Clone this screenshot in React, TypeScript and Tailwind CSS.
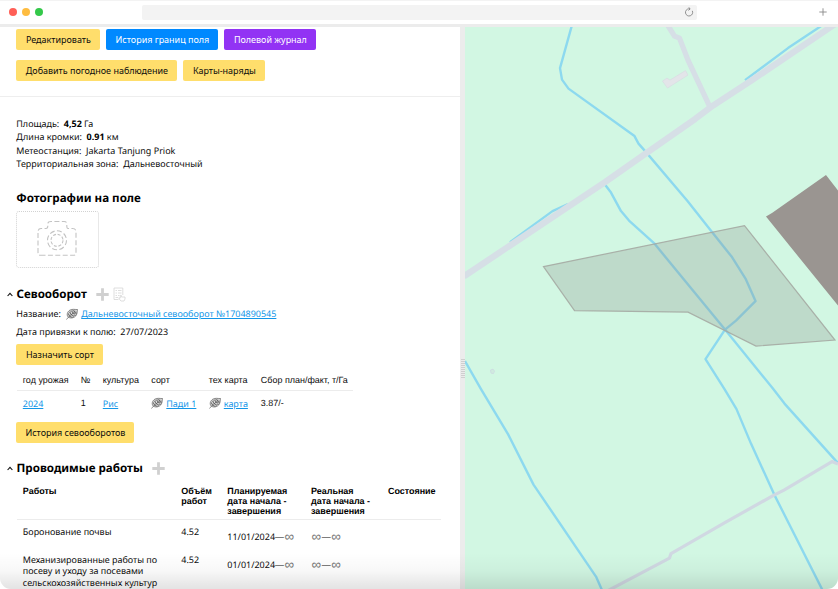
import type { ReactNode } from "react";

function Button({ children, className }: { children: ReactNode; className: string }) {
  return (
    <button className={`flex h-[21px] shrink-0 items-center justify-center rounded-[2px] whitespace-nowrap ${className}`}>
      {children}
    </button>
  );
}

function Link({ children, className = "" }: { children: ReactNode; className?: string }) {
  return (
    <a className={`text-[#1296e8] underline decoration-1 underline-offset-1 whitespace-nowrap ${className}`}>{children}</a>
  );
}

function Infinity() {
  return <span className="inline-block w-[10.8px] text-center align-[-1px] font-['Liberation_Sans',sans-serif] text-[13.5px] leading-[8px] text-[#777]">∞</span>;
}

function Dash() {
  return <span className="font-['Liberation_Sans',sans-serif]">—</span>;
}

function Plus() {
  return (
    <svg className="size-[13px] shrink-0" viewBox="0 0 13 13">
      <path d="M6.5 0.3V12.7M0.3 6.5H12.7" stroke="#d0d0d0" strokeWidth="2.8" fill="none" />
    </svg>
  );
}

function Chevron() {
  return (
    <svg className="mr-[4px] h-[5px] w-[6px] shrink-0" viewBox="0 0 6 5">
      <path d="M0.6 4L3 1.3L5.4 4" stroke="#111" strokeWidth="1.1" fill="none" />
    </svg>
  );
}

function Leaf() {
  return (
    <svg className="h-[12px] w-[12px] shrink-0" viewBox="0 0 12 12" fill="none" stroke="#444" strokeWidth="0.6">
      <path d="M0.5 11.5L2.4 9.2M2.4 9.2C0.4 7.4 1 4 3.8 2.2C6.2 0.7 8.8 1.6 11.7 1.6C10.9 2.8 11.6 4.8 10.4 7C8.8 9.8 5 10.8 2.4 9.2Z" fill="#999" fillOpacity="0.3" />
      <path d="M2.4 9.2L9.5 3M3.4 8.3L2.5 5M5 7L4 2.8M6.6 5.6L6 1.9M8.2 4.2L8 2M3.4 8.3L7 9.3M5 7L9.5 7.6M6.6 5.6L10.7 5.6M8.2 4.2H10.8M2 6L5.5 9.8M3 4L8 9M5 2.8L9.6 7.2M7 2.2L10.4 5.4" strokeWidth="0.5" />
    </svg>
  );
}

function ListHand() {
  return (
    <svg className="ml-[4px] h-[15px] w-[13px] shrink-0" viewBox="0 0 13 15" fill="none" stroke="#d5d5d5" strokeWidth="0.8">
      <path d="M5.5 12.5H1V1H9.8V8M2.5 3.5H4M5 3.5H8.5M2.5 6H4M5 6H8.5M2.5 8.5H4M5 8.5H6.5M2.5 10.5H5" />
      <path d="M7 13L5.8 10.8L7.3 11V8.4H8.4V10H12V12L11 14H8Z" />
    </svg>
  );
}

function Camera() {
  return (
    <svg className="h-[37px] w-[40px]" viewBox="0 0 40 37" fill="none" stroke="#c3c3c3" strokeWidth="1.1" strokeDasharray="5 2.4">
      <path d="M3.5 35.3H36.5Q39 35.3 39 32V12Q39 8.5 35.5 8.5H31Q29.8 8.5 29.8 6V4Q29.8 1.5 27 1.5H14Q10.8 1.5 10.8 4V6Q10.8 8.5 9 8.5H4Q1 8.5 1 12V32Q1 35.3 3.5 35.3Z" />
      <circle cx="20" cy="20.3" r="9.5" />
      <circle cx="20" cy="20.3" r="6" strokeDasharray="3 1.7" />
    </svg>
  );
}

function FieldMap() {
  return (
    <svg className="h-[562.4px] w-[372.6px] shrink-0" viewBox="465 26.9 372.6 562.4" fill="none">
      <rect x="464" y="26" width="375" height="564" fill="#d2f7e3" />
      <g stroke="#8dd9ef" strokeWidth="2.4" strokeLinejoin="round">
        <path d="M571.7 26L560 68L562 79.5L568.5 88.5L634.5 136L638.5 143.5L646 152L687.5 201L712 232L732 257L745.5 278.5L755.5 301L736 320.5L725 329.5L705.5 359L724.5 389L736.5 409L751 443.5L774.5 495L822.5 590" />
        <path d="M604.5 184L611 192.5L621 211L629 220.5L654 243L725 329.5L772.5 388L784.5 403.5L838 463" />
        <path d="M745 80L788 48L824 24M510 242L552.5 211L568 204" />
        <path d="M465 361L481 389L508 434L533.5 484.5L596 576.5L602 590" />
      </g>
      <g stroke="#d6dfe6" strokeLinejoin="round">
        <path d="M464 276.2L605 182L647 152.5L695 119L713 105.5L752 80L795 51L835 24" strokeWidth="6.3" />
        <path d="M667 24L674.5 36L679.5 38L688 60L709.5 106" strokeWidth="5.3" />
        <path d="M608 590.5L669.5 558L671 553.5L724 523L774 495L784 490L832 461.5L838 464" stroke="#d0d8e2" strokeWidth="3.2" />
      </g>
      <path d="M662.5 81L667 78L670 80L685.5 70.5L688 75L667.5 88Z" fill="#e3e5e9" stroke="#d9dde3" strokeWidth="0.7" />
      <path d="M490.5 370L493 369L494.5 371L493.5 373.5L491 373Z" fill="#d0ebdf" stroke="#cdd9e1" strokeWidth="0.8" />
      <path d="M543.5 266.5L744.5 225.5L835 340L756 346L688 312L574.5 310.5Z" fill="#8b9089" fillOpacity="0.28" stroke="#a5aaa3" strokeOpacity="0.9" strokeWidth="1.2" />
      <path d="M826 175L838 190.5V305.5L766 216.5L772 213Z" fill="#9a9591" />
    </svg>
  );
}

const works = [
  { name: <>Боронование почвы</>, area: "4.52", start: "11/01/2024" },
  { name: <>Механизированные работы по<br />посеву и уходу за посевами<br />сельскохозяйственных культур</>, area: "4.52", start: "01/01/2024" },
];

export default function App() {
  return (
    <div className="relative flex h-[589px] w-[838px] flex-col overflow-hidden rounded-b-[11px] bg-white font-['Noto_Sans',sans-serif] text-[8.97px] leading-[13px] text-[#0c0c0c] [text-rendering:geometricPrecision]">
      <header className="flex h-[26.6px] shrink-0 items-center border-t border-b-[3px] border-t-[#f3f3f3] border-b-[#ececec] pl-[8.5px]">
        <div className="flex w-[133.5px] gap-[5px] pb-[1.4px]">
          <i className="size-[8px] rounded-full bg-[#ff5f57]" />
          <i className="size-[8px] rounded-full bg-[#febc40]" />
          <i className="size-[8px] rounded-full bg-[#34c84a]" />
        </div>
        <div className="flex h-[15px] w-[555px] items-center justify-end rounded-[2px] bg-[#f3f3f3] pr-[3px]">
          <svg className="size-[10px]" viewBox="0 0 10 10" fill="none" stroke="#777" strokeWidth="0.8">
            <path d="M8.3 3.8A3.6 3.6 0 1 1 4.8 1.8H6M4.5 0.2L6.2 1.8L4.5 3.5" />
          </svg>
        </div>
        <svg className="ml-[121.5px] size-[8px]" viewBox="0 0 8 8">
          <path d="M4 0.3V7.7M0.3 4H7.7" stroke="#888" strokeWidth="0.9" />
        </svg>
      </header>

      <main className="flex h-[562.4px]">
        <section className="flex w-[460px] shrink-0 flex-col">
          <div className="flex h-[70.4px] shrink-0 flex-col gap-[9.5px] border-b border-[#eeeeee] pt-[2.9px] pl-[16.4px]">
            <div className="flex gap-[6px]">
              <Button className="w-[84px] bg-[#ffde6c]">Редактировать</Button>
              <Button className="w-[112px] bg-[#0089ff] text-white">История границ поля</Button>
              <Button className="w-[92px] bg-[#9233f4] text-white">Полевой журнал</Button>
            </div>
            <div className="flex gap-[6px]">
              <Button className="w-[161px] bg-[#ffde6c]">Добавить погодное наблюдение</Button>
              <Button className="w-[82px] bg-[#ffde6c]">Карты-наряды</Button>
            </div>
          </div>

          <div className="mt-[20.3px] shrink-0 pl-[16.3px] leading-[13.2px]">
            <p>Площадь:&nbsp; <b className="text-black">4,52</b> Га</p>
            <p>Длина кромки:&nbsp; <b className="text-black">0.91</b> км</p>
            <p>Метеостанция:&nbsp; Jakarta Tanjung Priok</p>
            <p>Территориальная зона:&nbsp; Дальневосточный</p>
          </div>

          <h2 className="mt-[21.4px] h-[16px] shrink-0 pl-[16.3px] text-[11.6px] leading-[16px] font-bold text-black">Фотографии на поле</h2>
          <div className="mt-[3.8px] ml-[16px] flex h-[57px] w-[83px] shrink-0 items-center justify-center rounded-[3px] border border-dotted border-[#d2d2d2]">
            <div className="-mt-[2px] -ml-[2px] flex"><Camera /></div>
          </div>

          <div className="mt-[16.2px] flex h-[20px] shrink-0 items-center pl-[6.5px]">
            <Chevron />
            <h2 className="w-[79.5px] text-[11.6px] font-bold text-black">Севооборот</h2>
            <Plus />
            <ListHand />
          </div>
          <div className="mt-[0.1px] flex h-[18px] shrink-0 items-center pl-[16.3px]">
            <span className="w-[49.5px]">Название:</span>
            <Leaf />
            <Link className="ml-[3.5px]">Дальневосточный севооборот №1704890545</Link>
          </div>
          <p className="h-[18px] shrink-0 pl-[16.3px] leading-[18px]">Дата привязки к полю:&nbsp; 27/07/2023</p>
          <Button className="mt-[3.3px] ml-[16.4px] w-[87px] bg-[#ffde6c]">Назначить сорт</Button>

          <div className="ml-[16.5px] w-[336px] shrink-0 font-['Liberation_Sans',sans-serif]">
            <div className="flex h-[26px] items-center border-b border-[#ececec] pt-[7px] pl-[6.3px] whitespace-nowrap">
              <span className="w-[58px]">год урожая</span>
              <span className="w-[22px]">№</span>
              <span className="w-[48.5px]">культура</span>
              <span className="w-[57.5px]">сорт</span>
              <span className="w-[52px]">тех карта</span>
              <span>Сбор план/факт, т/Га</span>
            </div>
            <div className="flex h-[25px] items-center pl-[6.3px]">
              <span className="w-[58px] font-['Noto_Sans',sans-serif]"><Link>2024</Link></span>
              <span className="w-[22px]">1</span>
              <span className="w-[48.5px] font-['Noto_Sans',sans-serif]"><Link>Рис</Link></span>
              <span className="flex w-[57.5px] items-center gap-[3px] font-['Noto_Sans',sans-serif]"><Leaf /><Link>Пади 1</Link></span>
              <span className="flex w-[52px] items-center gap-[3px] font-['Noto_Sans',sans-serif]"><Leaf /><Link>карта</Link></span>
              <span>3.87/-</span>
            </div>
          </div>
          <Button className="mt-[6px] ml-[16.4px] w-[118px] bg-[#ffde6c]">История севооборотов</Button>

          <div className="mt-[15.5px] flex h-[20px] shrink-0 items-center pl-[6.5px]">
            <Chevron />
            <h2 className="w-[135.5px] text-[11.6px] font-bold text-black">Проводимые работы</h2>
            <Plus />
          </div>

          <div className="-mt-[0.8px] ml-[16.5px] w-[424px] shrink-0">
            <div className="flex h-[42px] border-b border-[#ececec] pt-[8px] pl-[6.3px] font-['Liberation_Sans',sans-serif] leading-[10.1px] font-bold whitespace-nowrap text-black">
              <span className="w-[158.5px]">Работы</span>
              <span className="w-[46px]">Объём<br />работ</span>
              <span className="w-[83.7px]">Планируемая<br />дата начала -<br />завершения</span>
              <span className="w-[77px]">Реальная<br />дата начала -<br />завершения</span>
              <span>Состояние</span>
            </div>
            {works.map((work) => (
              <div key={work.start} className="flex h-[28.3px] pt-[6px] pl-[6.3px] leading-[11.5px] whitespace-nowrap">
                <span className="w-[158.5px]">{work.name}</span>
                <span className="w-[46px]">{work.area}</span>
                <span className="w-[83.7px] pt-[5.5px]">{work.start}<Dash /><Infinity /></span>
                <span className="pt-[5.5px]"><Infinity /><Dash /><Infinity /></span>
              </div>
            ))}
          </div>
        </section>

        <div className="flex w-[5.4px] shrink-0 flex-col items-center bg-[#ececec] pt-[332.4px]">
          <div className="flex flex-col gap-px">
            {Array.from({ length: 10 }, (_, i) => (
              <i key={i} className="h-px w-[4px] bg-[#cfcfcf]" />
            ))}
          </div>
        </div>
        <FieldMap />
      </main>
      <div className="pointer-events-none absolute inset-x-0 bottom-0 h-[36px] bg-gradient-to-b from-black/0 via-black/[0.03] to-black/[0.11]" />
    </div>
  );
}
